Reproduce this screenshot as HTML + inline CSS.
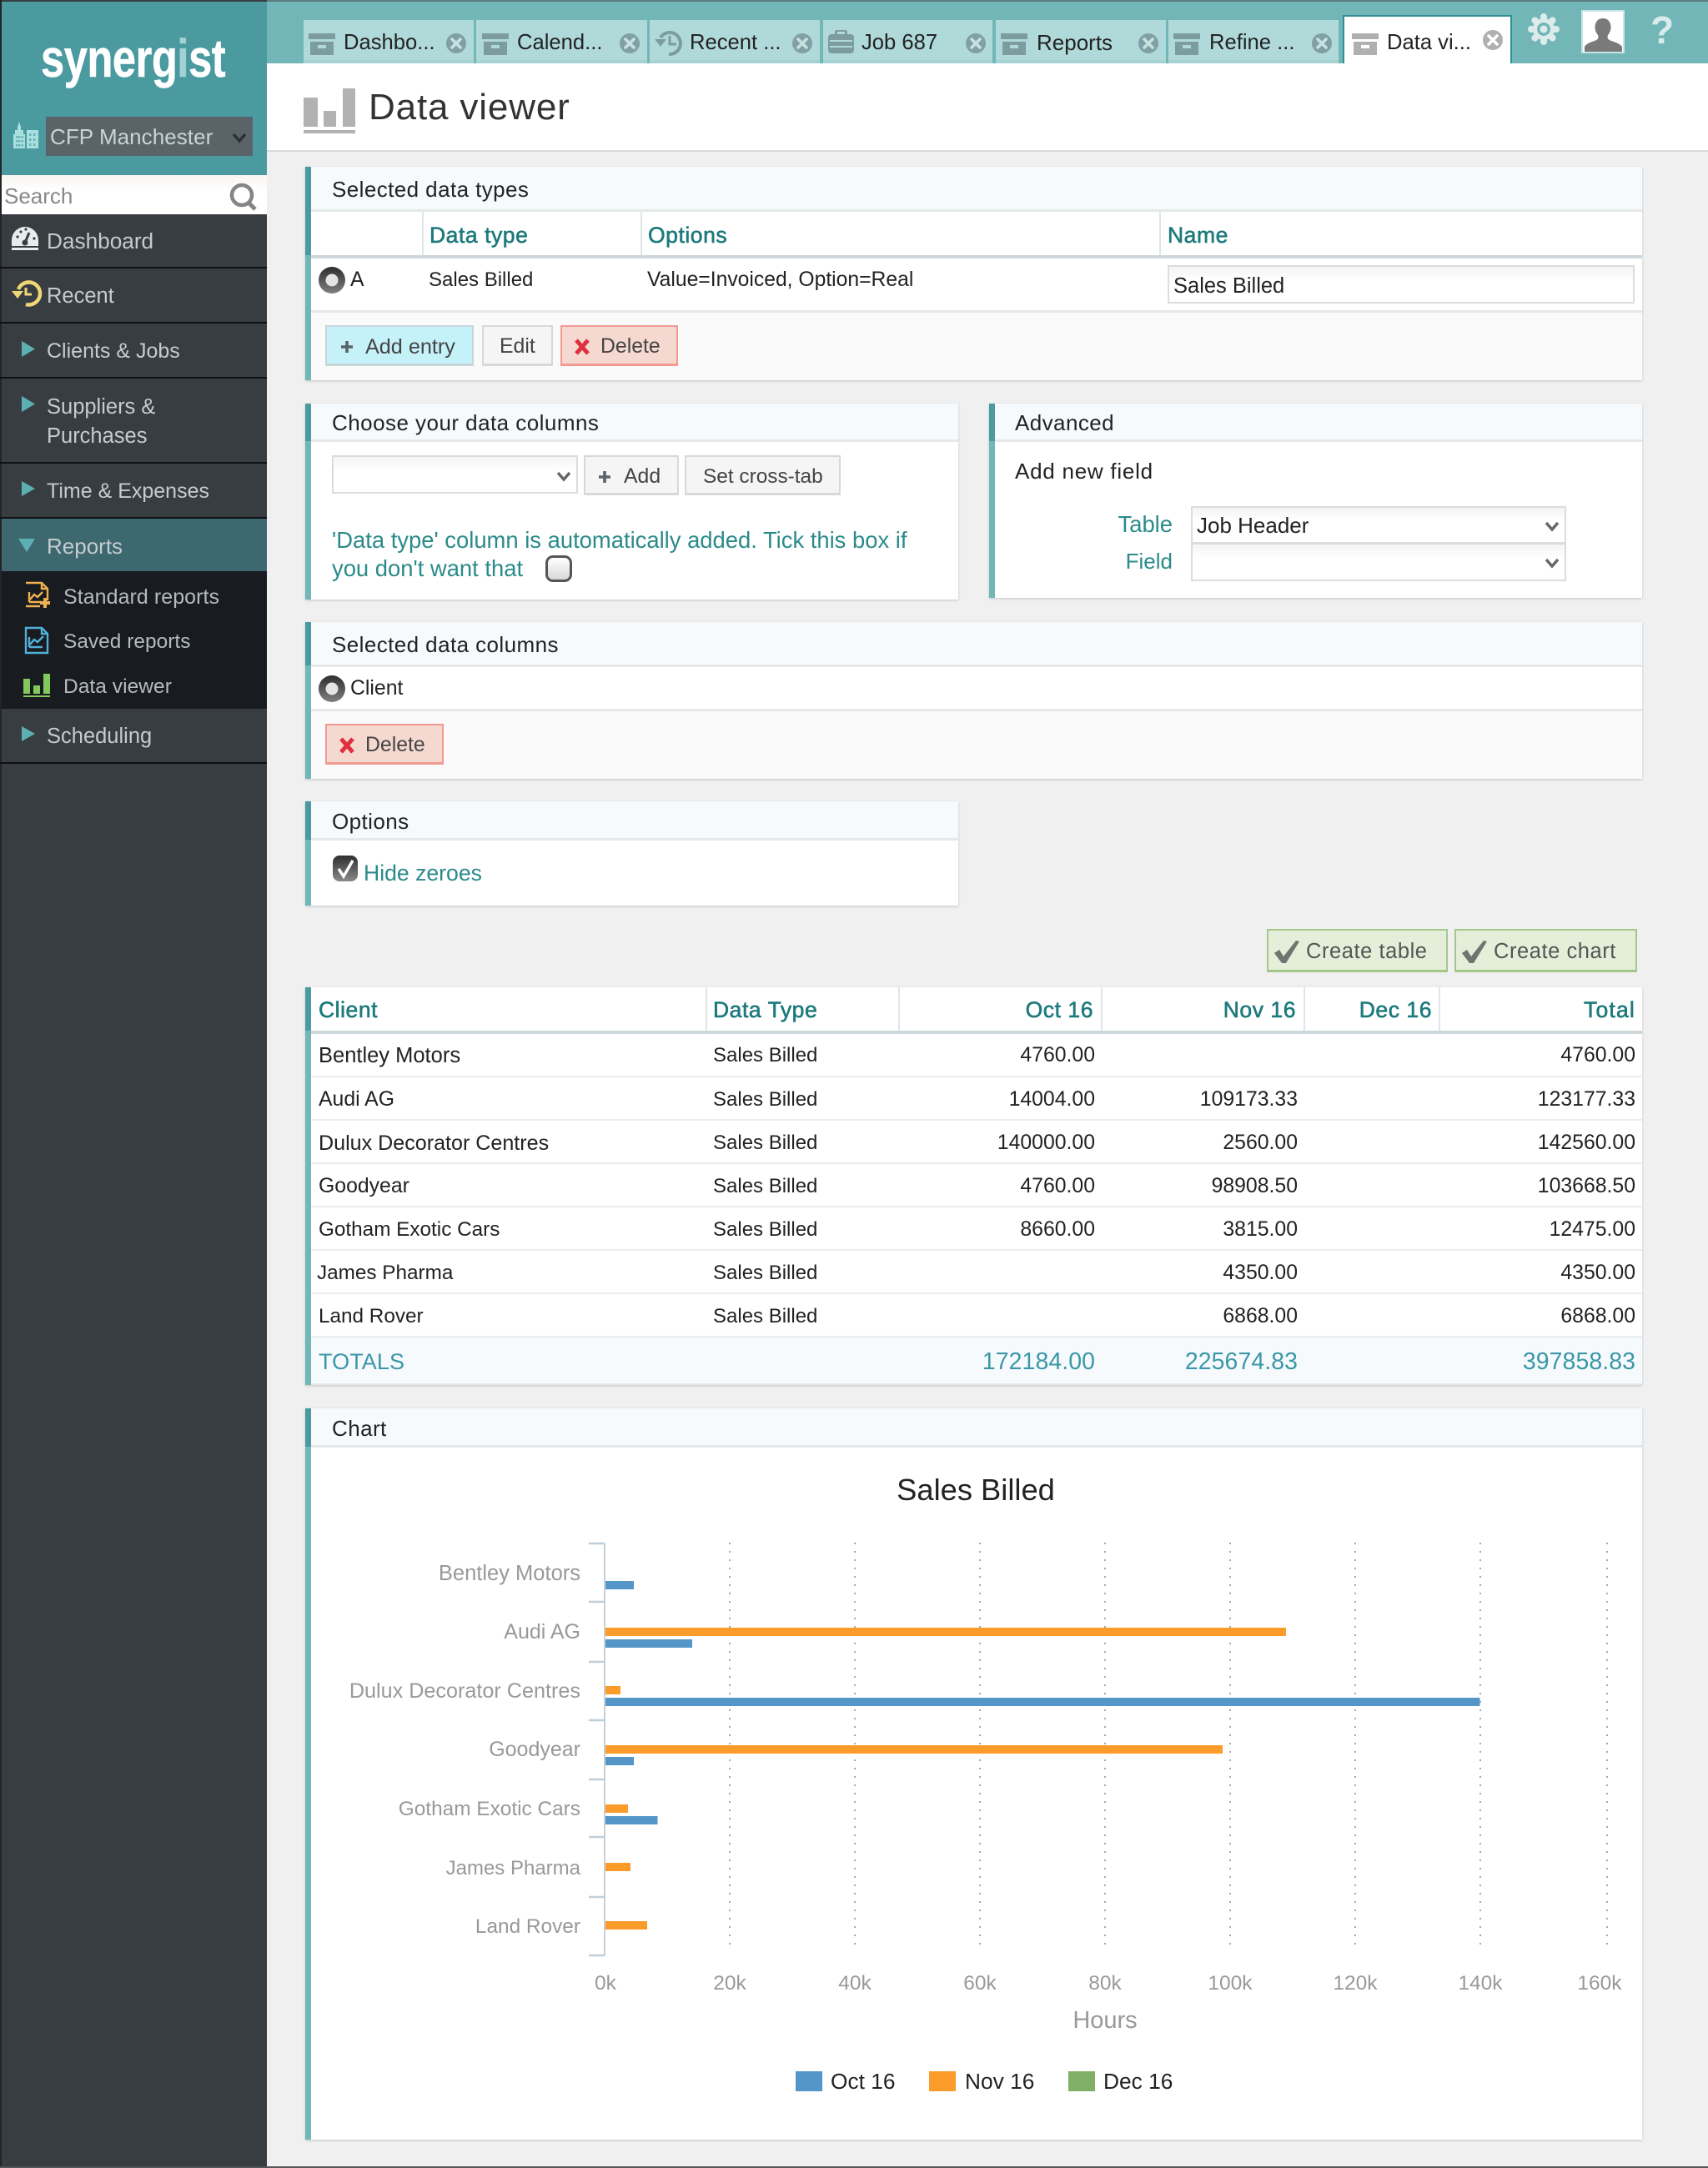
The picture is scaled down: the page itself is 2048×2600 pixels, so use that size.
<!DOCTYPE html>
<html lang="en"><head><meta charset="utf-8"><title>Data viewer</title>
<style>
html,body{margin:0;padding:0;width:2048px;height:2600px;overflow:hidden;background:#f0f0f0;font-family:"Liberation Sans",sans-serif;color:#222}
#page{position:relative;width:2048px;height:2600px;overflow:hidden;background:#f0f0f0}
.a{position:absolute}
.t{position:absolute;white-space:nowrap;line-height:30px;height:30px;font-size:24.8px;color:#222}
.h{font-size:26px;letter-spacing:.42px}
.c{font-size:26.5px;color:#1d7a7c;-webkit-text-stroke:.6px #1d7a7c;letter-spacing:.55px}
.s{color:#c4cccf;font-size:25.5px}
.m{color:#b4bbbd;font-size:25px;letter-spacing:.05px}
.g{color:#2b8a8a}
.tt{color:#3a97a8;font-size:28.4px;letter-spacing:.1px}
.tb{font-size:25.6px;color:#222}
.sb{font-size:24px}
.p{position:absolute;background:#fff;box-shadow:0 1px 3px rgba(0,0,0,.18)}
.bar{position:absolute;left:0;top:0;bottom:0;width:7px;background:#72b7b8}
.barh{position:absolute;left:0;top:0;width:7px;background:#4a9a9f}
.ph{position:absolute;left:7px;right:0;top:0;background:#f6fafc;border-bottom:3px solid #e4e8e8}
.foot{position:absolute;left:7px;right:0;bottom:0;background:#fafafa;border-top:3px solid #e8e8e8}
.sep{position:absolute;width:2px;background:#dfe6e8}
.thick{position:absolute;height:4px;background:#ced8dc}
.line{position:absolute;height:2px;background:#eceeee}
.btn{position:absolute;box-sizing:border-box;border:2px solid #d8d8d8;border-bottom-width:3px;background:#f5f5f5}
.sel{position:absolute;box-sizing:border-box;border:2px solid #dcdcdc;background:linear-gradient(#f4f4f4,#fff 40%)}
.tab{position:absolute;top:24px;height:52px;background:#b0dada;border-bottom:4px solid #a6d2d2;box-sizing:border-box}
.dv{position:absolute;left:0;width:320px;height:2px;background:#0e1012}
</style></head><body><div id="page">

<!-- top bar -->
<div class="a" style="left:320px;top:0;width:1728px;height:76px;background:#73b6b8"></div>
<div class="a" style="left:0;top:0;width:2048px;height:2px;background:#5a7c7e"></div>
<div class="a" style="left:320px;top:76px;width:1728px;height:104px;background:#fff"></div>
<div class="a" style="left:320px;top:180px;width:1728px;height:2px;background:#d8dcdc"></div>

<!-- tabs -->
<div class="tab" style="left:364px;width:204px"></div>
<div class="tab" style="left:571px;width:205px"></div>
<div class="tab" style="left:779px;width:204px"></div>
<div class="tab" style="left:987px;width:203px"></div>
<div class="tab" style="left:1194px;width:204px"></div>
<div class="tab" style="left:1401px;width:204px"></div>
<div class="a" style="left:1610px;top:18px;width:203px;height:58px;background:#fff;box-sizing:border-box;border:2px solid #2e8f94;border-bottom:0"></div>
<div class="t tb" style="left:412px;top:36px">Dashbo...</div>
<div class="t tb" style="left:620px;top:36px">Calend...</div>
<div class="t tb" style="left:827px;top:36px">Recent ...</div>
<div class="t tb" style="left:1033px;top:36px">Job 687</div>
<div class="t tb" style="left:1243px;top:36px;font-size:26px">Reports</div>
<div class="t tb" style="left:1450px;top:36px">Refine ...</div>
<div class="t tb" style="left:1663px;top:36px">Data vi...</div>

<div class="t" style="left:442px;top:104px;height:50px;line-height:50px;font-size:44px;letter-spacing:.85px;color:#333">Data viewer</div>

<!-- sidebar -->
<div class="a" style="left:0;top:0;width:320px;height:2600px;background:#383d42;border-left:2px solid #22262a;box-sizing:border-box"></div>
<div class="a" style="left:2px;top:2px;width:318px;height:208px;background:#4a9aa0"></div>
<div class="t" style="left:49px;top:30px;height:80px;line-height:80px;font-size:64px;font-weight:700;color:#fff;-webkit-text-stroke:.6px #fff;transform-origin:0 50%;transform:scaleX(.79);letter-spacing:-.5px">synerg<span style="color:#a4d2d4;-webkit-text-stroke:.6px #a4d2d4">i</span>st</div>
<div class="a" style="left:55px;top:140px;width:248px;height:47px;background:#5a6468"></div>
<div class="t" style="left:60px;top:149px;font-size:26px;letter-spacing:.05px;color:#c8d4d6">CFP Manchester</div>
<div class="a" style="left:2px;top:210px;width:318px;height:47px;background:linear-gradient(#f8f5f2,#fff 40%)"></div>
<div class="t" style="left:5px;top:220px;font-size:26px;color:#888">Search</div>
<div class="dv" style="top:320px"></div><div class="dv" style="top:386px"></div><div class="dv" style="top:452px"></div><div class="dv" style="top:554px"></div><div class="dv" style="top:620px"></div>
<div class="a" style="left:2px;top:622px;width:318px;height:63px;background:#3d6870"></div>
<div class="a" style="left:2px;top:685px;width:318px;height:165px;background:#181b1f"></div>
<div class="dv" style="top:914px"></div>
<div class="t s" style="left:56px;top:274px;font-size:26.2px">Dashboard</div>
<div class="t s" style="left:56px;top:340px">Recent</div>
<div class="t s" style="left:56px;top:406px;font-size:25px">Clients &amp; Jobs</div>
<div class="t s" style="left:56px;top:473px">Suppliers &amp;</div>
<div class="t s" style="left:56px;top:508px">Purchases</div>
<div class="t s" style="left:56px;top:574px;font-size:25px">Time &amp; Expenses</div>
<div class="t s" style="left:56px;top:640px;font-size:26px">Reports</div>
<div class="t m" style="left:76px;top:701px">Standard reports</div>
<div class="t m" style="left:76px;top:755px;font-size:24.4px">Saved reports</div>
<div class="t m" style="left:76px;top:809px;font-size:24.5px">Data viewer</div>
<div class="t s" style="left:56px;top:868px">Scheduling</div>

<!-- Selected data types -->
<div class="p" style="left:366px;top:200px;width:1603px;height:256px">
 <div class="bar"></div><div class="barh" style="height:106px"></div>
 <div class="ph" style="height:51px"></div>
 <div class="sep" style="left:140px;top:54px;height:52px"></div>
 <div class="sep" style="left:402px;top:54px;height:52px"></div>
 <div class="sep" style="left:1024px;top:54px;height:52px"></div>
 <div class="thick" style="left:7px;right:0;top:106px"></div>
 <div class="foot" style="height:81px"></div>
</div>
<div class="t h" style="left:398px;top:212px">Selected data types</div>
<div class="t c" style="left:515px;top:267px">Data type</div>
<div class="t c" style="left:777px;top:267px">Options</div>
<div class="t c" style="left:1400px;top:267px">Name</div>
<div class="t" style="left:420px;top:321px">A</div>
<div class="t sb" style="left:514px;top:321px">Sales Billed</div>
<div class="t" style="left:776px;top:321px;font-size:24.7px">Value=Invoiced, Option=Real</div>
<div class="sel" style="left:1400px;top:318px;width:560px;height:46px"></div>
<div class="t" style="left:1407px;top:328px;font-size:25.5px">Sales Billed</div>
<div class="btn" style="left:390px;top:390px;width:178px;height:49px;background:#c5f1f9;border-color:#c8d6da"></div>
<div class="t" style="left:438px;top:401px;color:#444;font-size:25.2px">Add entry</div>
<div class="btn" style="left:578px;top:390px;width:85px;height:49px"></div>
<div class="t" style="left:599px;top:401px;color:#444">Edit</div>
<div class="btn" style="left:672px;top:390px;width:141px;height:49px;background:#f5d9d0;border-color:#f29a90"></div>
<div class="t" style="left:720px;top:401px;color:#444">Delete</div>

<!-- Choose your data columns -->
<div class="p" style="left:366px;top:484px;width:783px;height:235px">
 <div class="bar"></div><div class="barh" style="height:45px"></div>
 <div class="ph" style="height:43px"></div>
</div>
<div class="t h" style="left:398px;top:492px;letter-spacing:.46px">Choose your data columns</div>
<div class="sel" style="left:398px;top:546px;width:295px;height:46px"></div>
<div class="btn" style="left:700px;top:546px;width:114px;height:48px"></div>
<div class="t" style="left:748px;top:557px;color:#444">Add</div>
<div class="btn" style="left:821px;top:546px;width:187px;height:48px"></div>
<div class="t" style="left:843px;top:557px;color:#444;font-size:24.4px">Set cross-tab</div>
<div class="t g" style="left:398px;top:633px;font-size:27.4px">'Data type' column is automatically added. Tick this box if</div>
<div class="t g" style="left:398px;top:667px;font-size:27.4px">you don't want that</div>
<div class="a" style="left:654px;top:666px;width:32px;height:32px;box-sizing:border-box;border:3px solid #555;border-radius:9px;background:linear-gradient(#fff,#d8d8d8)"></div>

<!-- Advanced -->
<div class="p" style="left:1186px;top:484px;width:783px;height:233px">
 <div class="bar"></div><div class="barh" style="height:45px"></div>
 <div class="ph" style="height:43px"></div>
</div>
<div class="t h" style="left:1217px;top:492px">Advanced</div>
<div class="t" style="left:1217px;top:550px;font-size:26px;letter-spacing:.75px">Add new field</div>
<div class="t g" style="right:642px;top:614px;font-size:27.4px">Table</div>
<div class="t g" style="right:642px;top:658px;font-size:26px">Field</div>
<div class="sel" style="left:1428px;top:607px;width:450px;height:45px"></div>
<div class="sel" style="left:1428px;top:651px;width:450px;height:46px"></div>
<div class="t" style="left:1435px;top:615px;font-size:26px">Job Header</div>

<!-- Selected data columns -->
<div class="p" style="left:366px;top:746px;width:1603px;height:188px">
 <div class="bar"></div><div class="barh" style="height:52px"></div>
 <div class="ph" style="height:51px"></div>
 <div class="foot" style="height:81px"></div>
</div>
<div class="t h" style="left:398px;top:758px;letter-spacing:.42px">Selected data columns</div>
<div class="t" style="left:420px;top:811px">Client</div>
<div class="btn" style="left:390px;top:868px;width:142px;height:49px;background:#f5d9d0;border-color:#f29a90"></div>
<div class="t" style="left:438px;top:879px;color:#444">Delete</div>

<!-- Options -->
<div class="p" style="left:366px;top:961px;width:783px;height:125px">
 <div class="bar"></div><div class="barh" style="height:46px"></div>
 <div class="ph" style="height:44px"></div>
</div>
<div class="t h" style="left:398px;top:970px">Options</div>
<div class="t g" style="left:436px;top:1032px;font-size:26.6px">Hide zeroes</div>

<!-- Create -->
<div class="btn" style="left:1519px;top:1114px;width:217px;height:52px;background:#e3efd8;border-color:#a5c88a"></div>
<div class="t" style="left:1566px;top:1126px;color:#555;font-size:25.5px;letter-spacing:.55px">Create table</div>
<div class="btn" style="left:1744px;top:1114px;width:219px;height:52px;background:#e3efd8;border-color:#a5c88a"></div>
<div class="t" style="left:1791px;top:1126px;color:#555;font-size:25.5px;letter-spacing:.55px">Create chart</div>

<!-- Table -->
<div class="p" style="left:366px;top:1184px;width:1603px;height:477px">
 <div class="bar"></div><div class="barh" style="height:52px"></div>
 <div class="sep" style="left:480px;top:0;height:52px"></div>
 <div class="sep" style="left:711px;top:0;height:52px"></div>
 <div class="sep" style="left:954px;top:0;height:52px"></div>
 <div class="sep" style="left:1197px;top:0;height:52px"></div>
 <div class="sep" style="left:1359px;top:0;height:52px"></div>
 <div class="thick" style="left:7px;right:0;top:52px"></div>
 <div class="line" style="left:7px;right:0;top:106px"></div>
 <div class="line" style="left:7px;right:0;top:158px"></div>
 <div class="line" style="left:7px;right:0;top:210px"></div>
 <div class="line" style="left:7px;right:0;top:262px"></div>
 <div class="line" style="left:7px;right:0;top:314px"></div>
 <div class="line" style="left:7px;right:0;top:366px"></div>
 <div class="a" style="left:7px;right:0;top:418px;height:59px;background:#f6fafc;border-top:2px solid #e6eeee;box-sizing:border-box;border-bottom:2px solid #e6e8e8"></div>
</div>
<div class="t c" style="left:382px;top:1196px">Client</div>
<div class="t c" style="left:855px;top:1196px">Data Type</div>
<div class="t c" style="right:737px;top:1196px">Oct 16</div>
<div class="t c" style="right:494px;top:1196px">Nov 16</div>
<div class="t c" style="right:331px;top:1196px">Dec 16</div>
<div class="t c" style="right:87px;top:1196px;letter-spacing:1.2px">Total</div>

<div class="t" style="left:382px;top:1251px;font-size:25.5px">Bentley Motors</div><div class="t sb" style="left:855px;top:1251px">Sales Billed</div><div class="t" style="right:735px;top:1251px">4760.00</div><div class="t" style="right:87px;top:1251px">4760.00</div>
<div class="t" style="left:382px;top:1304px">Audi AG</div><div class="t sb" style="left:855px;top:1304px">Sales Billed</div><div class="t" style="right:735px;top:1304px">14004.00</div><div class="t" style="right:492px;top:1304px">109173.33</div><div class="t" style="right:87px;top:1304px">123177.33</div>
<div class="t" style="left:382px;top:1356px;font-size:25.1px">Dulux Decorator Centres</div><div class="t sb" style="left:855px;top:1356px">Sales Billed</div><div class="t" style="right:735px;top:1356px">140000.00</div><div class="t" style="right:492px;top:1356px">2560.00</div><div class="t" style="right:87px;top:1356px">142560.00</div>
<div class="t" style="left:382px;top:1408px">Goodyear</div><div class="t sb" style="left:855px;top:1408px">Sales Billed</div><div class="t" style="right:735px;top:1408px">4760.00</div><div class="t" style="right:492px;top:1408px">98908.50</div><div class="t" style="right:87px;top:1408px">103668.50</div>
<div class="t" style="left:382px;top:1460px;font-size:24.3px">Gotham Exotic Cars</div><div class="t sb" style="left:855px;top:1460px">Sales Billed</div><div class="t" style="right:735px;top:1460px">8660.00</div><div class="t" style="right:492px;top:1460px">3815.00</div><div class="t" style="right:87px;top:1460px">12475.00</div>
<div class="t" style="left:380px;top:1512px;font-size:24.3px">James Pharma</div><div class="t sb" style="left:855px;top:1512px">Sales Billed</div><div class="t" style="right:492px;top:1512px">4350.00</div><div class="t" style="right:87px;top:1512px">4350.00</div>
<div class="t" style="left:382px;top:1564px;font-size:24.3px">Land Rover</div><div class="t sb" style="left:855px;top:1564px">Sales Billed</div><div class="t" style="right:492px;top:1564px">6868.00</div><div class="t" style="right:87px;top:1564px">6868.00</div>
<div class="t tt" style="left:382px;top:1618px;font-size:27px">TOTALS</div>
<div class="t tt" style="right:735px;top:1618px">172184.00</div>
<div class="t tt" style="right:492px;top:1618px">225674.83</div>
<div class="t tt" style="right:87px;top:1618px">397858.83</div>

<!-- Chart panel -->
<div class="p" style="left:366px;top:1689px;width:1603px;height:877px">
 <div class="bar"></div><div class="barh" style="height:46px"></div>
 <div class="ph" style="height:44px"></div>
</div>
<div class="t h" style="left:398px;top:1698px">Chart</div>

<!-- bottom line -->
<div class="a" style="left:0;top:2598px;width:2048px;height:2px;background:#555"></div>

<svg class="a" style="left:0;top:0" width="2048" height="2600" viewBox="0 0 2048 2600" xmlns="http://www.w3.org/2000/svg">
<defs>
 <g id="box"><rect x="0" y="0" width="32" height="7"/><path d="M2 10h28v16H2zM11 14v4h10v-4z" fill-rule="evenodd"/></g>
 <g id="cl"><circle r="12"/><path d="M-5-5L5 5M5-5L-5 5" stroke="#c8e2e2" stroke-width="3.6" stroke-linecap="round" fill="none"/></g>
 <g id="rad"><circle r="16" fill="url(#rg)"/><circle r="7.500" fill="#e4e4e4"/></g>
 <linearGradient id="rg" x1="0" y1="0" x2="0" y2="1"><stop offset="0" stop-color="#2e2e2e"/><stop offset="1" stop-color="#808080"/></linearGradient>
 <linearGradient id="cg" x1="0" y1="0" x2="0" y2="1"><stop offset="0" stop-color="#2e2e2e"/><stop offset="1" stop-color="#8a8a8a"/></linearGradient>
 <path id="chev" d="M-7-4L0 4L7-4" fill="none" stroke-width="3.4"/>
 <path id="xx" d="M-7-8L7 8M7-8L-7 8" fill="none" stroke="#e0303f" stroke-width="5"/>
 <path id="pl" d="M-7 0H7M0-7V7" fill="none" stroke="#5a6468" stroke-width="3.6"/>
 <path id="ck" d="M0 15L6 11L11 19L26 0L30 1L14 27H9Z" fill="#6d7570"/>
</defs>

<!-- tab icons -->
<use href="#box" x="370" y="40" fill="#7c9ca0"/>
<use href="#box" x="578" y="40" fill="#7c9ca0"/>
<g fill="none" stroke="#7c9ca0" stroke-width="4"><path d="M792 45A13 13 0 1 1 802 65"/><path d="M803 43V53H811" stroke-width="3"/></g>
<path d="M785 47H799L792 56Z" fill="#7c9ca0"/>
<g fill="#7c9ca0"><rect x="993" y="41" width="31" height="23" rx="4"/><path d="M1001 41V38Q1001 36 1003 36H1014Q1016 36 1016 38V41H1013V38H1004V41Z"/></g>
<path d="M995 49H1022M995 56H1022" stroke="#b0dada" stroke-width="2"/>
<use href="#box" x="1200" y="40" fill="#7c9ca0"/>
<use href="#box" x="1407" y="40" fill="#7c9ca0"/>
<use href="#box" x="1621" y="40" fill="#b0b0b0"/>
<use href="#cl" x="547" y="52" fill="#80a0a4"/>
<use href="#cl" x="755" y="52" fill="#80a0a4"/>
<use href="#cl" x="962" y="52" fill="#80a0a4"/>
<use href="#cl" x="1170" y="52" fill="#80a0a4"/>
<use href="#cl" x="1377" y="52" fill="#80a0a4"/>
<use href="#cl" x="1585" y="52" fill="#80a0a4"/>
<g transform="translate(1790 48)"><circle r="12" fill="#b0b0b0"/><path d="M-5-5L5 5M5-5L-5 5" stroke="#fff" stroke-width="3.6" stroke-linecap="round"/></g>

<!-- gear -->
<g transform="translate(1851 35)" fill="#dcecec"><circle r="13"/>
 <g stroke="#dcecec" stroke-width="8" stroke-linecap="round"><path d="M0-15V-14M0 15V14M-15 0H-14M15 0H14M-10.600-10.600L-10-10M10.600 10.600L10 10M-10.600 10.600L-10 10M10.600-10.600L10-10"/></g>
 <circle r="8" fill="#73b6b8"/><circle r="4.500"/></g>
<!-- avatar -->
<rect x="1897" y="13" width="50" height="50" fill="#fff" stroke="#c4e6e6" stroke-width="2"/>
<path d="M1900 62V56Q1902 52 1912 49Q1918 47 1916 42Q1911 36 1913 29Q1915 22 1922 22Q1929 22 1931 29Q1933 36 1928 42Q1926 47 1932 49Q1942 52 1945 56V62Z" fill="#7a7a7a"/>
<text x="1993" y="52" font-family="Liberation Sans" font-weight="700" font-size="46" fill="#d8ecec" text-anchor="middle">?</text>

<!-- header bars -->
<g fill="#b2b2b2"><rect x="364" y="117" width="17" height="35"/><rect x="388" y="133" width="15" height="19"/><rect x="411" y="106" width="15" height="46"/><rect x="364" y="156" width="62" height="4"/></g>

<!-- sidebar icons -->
<g fill="#a8e0e0"><path d="M16 178V161H18V156H21V152L23 146L25 152V156H28V161H30V178Z"/><rect x="32" y="156" width="14" height="22"/></g>
<g fill="#6cb4b8"><rect x="19" y="163" width="2.500" height="2.500"/><rect x="22" y="163" width="2.500" height="2.500"/><rect x="25.500" y="163" width="2.500" height="2.500"/><rect x="19" y="168" width="2.500" height="2.500"/><rect x="22" y="168" width="2.500" height="2.500"/><rect x="25.500" y="168" width="2.500" height="2.500"/><rect x="19" y="173" width="2.500" height="2.500"/><rect x="22" y="173" width="2.500" height="2.500"/><rect x="25.500" y="173" width="2.500" height="2.500"/><rect x="35" y="160" width="2.500" height="3"/><rect x="40" y="160" width="2.500" height="3"/><rect x="35" y="166" width="2.500" height="3"/><rect x="40" y="166" width="2.500" height="3"/><rect x="35" y="172" width="2.500" height="3"/><rect x="40" y="172" width="2.500" height="3"/></g>
<use href="#chev" x="287" y="165" stroke="#2b3034"/>
<circle cx="290" cy="234" r="12" fill="none" stroke="#858585" stroke-width="4.500"/><path d="M298 243L306 251" stroke="#858585" stroke-width="5"/>
<!-- dashboard gauge -->
<path d="M14 295V288A16 16 0 0 1 46 288V295Z" fill="#e8ecec"/>
<path d="M30 291L35 279" stroke="#383d42" stroke-width="3"/><circle cx="30" cy="291" r="3.500" fill="#383d42"/>
<circle cx="21" cy="284" r="1.600" fill="#383d42"/><circle cx="25" cy="278" r="1.600" fill="#383d42"/><circle cx="31" cy="275" r="1.600" fill="#383d42"/><circle cx="41" cy="286" r="1.600" fill="#383d42"/>
<rect x="14" y="297" width="32" height="3" fill="#e8ecec"/>
<!-- recent -->
<path d="M22 347A13.500 13.500 0 1 1 31 365" fill="none" stroke="#efd775" stroke-width="4.500"/><path d="M14 349H28L21 358Z" fill="#efd775"/><path d="M31 345V353H38" fill="none" stroke="#efd775" stroke-width="3"/>
<!-- triangles -->
<g fill="#5cb0b4"><path d="M26 409L42 418.500L26 428Z"/><path d="M26 475L42 484.500L26 494Z"/><path d="M26 577L42 586L26 595Z"/><path d="M22 646H42L32 662Z"/><path d="M26 871L42 880L26 889Z"/></g>
<!-- report icons -->
<g fill="none" stroke="#f0b050" stroke-width="2.400"><path d="M31 699H50L57 706V720M48 727H31Z"/><path d="M50 699V706H57M35 722H50M35 710V722M36 719L41 713L45 716L51 710"/></g>
<path d="M48 723H60M54 717V729" stroke="#f0b050" stroke-width="4"/>
<g fill="none" stroke="#52b0d8" stroke-width="2.400"><path d="M31 753H50L57 760V783H31Z"/><path d="M50 753V760H57M35 776H51M35 764V776M36 773L41 767L45 770L52 763"/></g>
<g fill="#82c85a"><rect x="28" y="814" width="8" height="18"/><rect x="40" y="822" width="8" height="10"/><rect x="52" y="808" width="8" height="24"/><rect x="28" y="834" width="32" height="2"/></g>

<!-- radios -->
<use href="#rad" x="398" y="336"/><use href="#rad" x="398" y="826"/>
<!-- buttons icons -->
<use href="#pl" x="416" y="416"/><use href="#xx" x="698" y="416"/><use href="#pl" x="725" y="572"/><use href="#xx" x="416" y="894"/>
<use href="#ck" x="1528" y="1128"/><use href="#ck" x="1753" y="1128"/>
<!-- select chevrons -->
<use href="#chev" x="676" y="571" stroke="#666"/><use href="#chev" x="1861" y="631" stroke="#666"/><use href="#chev" x="1861" y="675" stroke="#666"/>
<!-- checked box -->
<rect x="399" y="1026" width="30" height="31" rx="8" fill="url(#cg)"/><path d="M406 1042L412 1051L423 1032" fill="none" stroke="#fff" stroke-width="3.400"/>

<!-- chart -->
<g stroke="#a8a8a8" stroke-width="2" stroke-dasharray="2 8" fill="none">
<path d="M875 1850V2340M1025 1850V2340M1175 1850V2340M1325 1850V2340M1475 1850V2340M1625 1850V2340M1775 1850V2340M1927 1850V2340"/></g>
<path d="M725 1851V2345" stroke="#c8d0d6" stroke-width="2"/>
<path d="M706 1851H725M706 1921H725M706 1993H725M706 2063H725M706 2134H725M706 2203H725M706 2275H725M706 2345H725" stroke="#bfcfda" stroke-width="2.500"/>
<g fill="#5596c8"><rect x="726" y="1896" width="34" height="10"/><rect x="726" y="1966" width="104" height="10"/><rect x="726" y="2036" width="1048.500" height="10"/><rect x="726" y="2107" width="34" height="10"/><rect x="726" y="2178" width="62.500" height="10"/></g>
<g fill="#fb9c2a"><rect x="726" y="1952" width="816" height="10"/><rect x="726" y="2022" width="18" height="10"/><rect x="726" y="2093" width="740" height="10"/><rect x="726" y="2164" width="27" height="10"/><rect x="726" y="2234" width="30" height="10"/><rect x="726" y="2304" width="50" height="10"/></g>
<g font-family="Liberation Sans" font-size="25" fill="#999" text-anchor="end">
<text x="696" y="1895" font-size="25.500">Bentley Motors</text><text x="696" y="1965">Audi AG</text><text x="696" y="2036" font-size="25.200">Dulux Decorator Centres</text><text x="696" y="2106">Goodyear</text><text x="696" y="2177" font-size="24.400">Gotham Exotic Cars</text><text x="696" y="2248" font-size="24">James Pharma</text><text x="696" y="2318" font-size="24.400">Land Rover</text></g>
<g font-family="Liberation Sans" font-size="24.500" fill="#999" text-anchor="middle">
<text x="726" y="2386">0k</text><text x="875" y="2386">20k</text><text x="1025" y="2386">40k</text><text x="1175" y="2386">60k</text><text x="1325" y="2386">80k</text><text x="1475" y="2386">100k</text><text x="1625" y="2386">120k</text><text x="1775" y="2386">140k</text><text x="1918" y="2386">160k</text>
<text x="1325" y="2432" font-size="29">Hours</text></g>
<text x="1170" y="1799" font-family="Liberation Sans" font-size="36.300" fill="#222" text-anchor="middle">Sales Billed</text>
<rect x="954" y="2484" width="32" height="24" fill="#5596c8"/><rect x="1114" y="2484" width="32" height="24" fill="#fb9c2a"/><rect x="1281" y="2484" width="32" height="24" fill="#80b067"/>
<g font-family="Liberation Sans" font-size="26.300" fill="#222"><text x="996" y="2505">Oct 16</text><text x="1157" y="2505">Nov 16</text><text x="1323" y="2505">Dec 16</text></g>
</svg>
</div></body></html>
